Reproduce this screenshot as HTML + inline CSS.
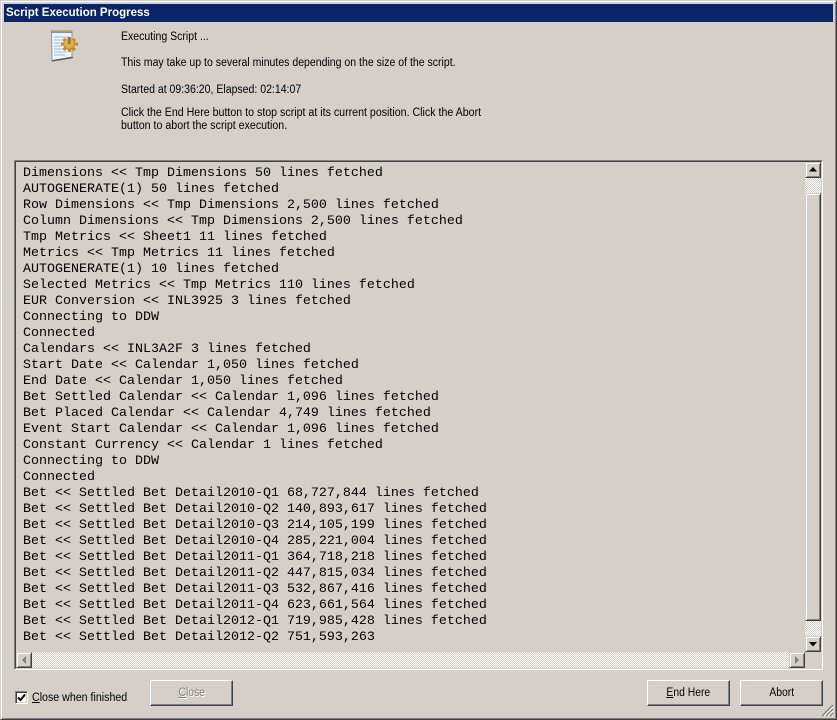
<!DOCTYPE html>
<html><head><meta charset="utf-8"><style>
html,body{margin:0;padding:0;background:#d4d0c8}
#w{position:relative;width:837px;height:720px;overflow:hidden;background:#d4d0c8;font-family:"Liberation Sans",sans-serif;font-size:11.5px;color:#000}
#w div{position:absolute;box-sizing:border-box}
.t{white-space:nowrap;line-height:14px;transform:scaleX(.915);transform-origin:0 0}
.c{transform:scaleX(.925)}
.chk{background-color:#fff;background-image:linear-gradient(45deg,#d4d0c8 25%,transparent 25%,transparent 75%,#d4d0c8 75%),linear-gradient(45deg,#d4d0c8 25%,transparent 25%,transparent 75%,#d4d0c8 75%);background-size:2px 2px;background-position:0 0,1px 1px}
.btn{background:#d4d0c8;border:1px solid;border-color:#fff #404040 #404040 #fff;box-shadow:inset -1px -1px 0 #808080}
.sb{background:#d4d0c8;border:1px solid;border-color:#d4d0c8 #404040 #404040 #d4d0c8;box-shadow:inset 1px 1px 0 #fff,inset -1px -1px 0 #808080}
.bt{text-align:center;line-height:24px;white-space:nowrap}
.bt span{display:inline-block;transform:scaleX(.9)}
#log{left:23px;top:166px;font:13.33px/16px "Liberation Mono",monospace;white-space:pre;color:#000}
</style></head><body><div id="w">
<div style="left:0;top:0;width:837px;height:720px;border:1px solid;border-color:#d4d0c8 #404040 #404040 #d4d0c8;box-shadow:inset 1px 1px 0 #fff,inset -1px -1px 0 #808080"></div>
<div style="left:4px;top:4px;width:829px;height:18px;background:#0a246a"></div>
<div style="left:6px;top:6px;color:#fff;font-weight:bold;font-size:11.5px;line-height:14px;white-space:nowrap">Script Execution Progress</div>

<svg style="position:absolute;left:49px;top:28px" width="32" height="35" viewBox="0 0 32 35">
<path d="M2.500 3H23V29L3 32.500Z" fill="#eef5fc" stroke="#8a93a8" stroke-width="1"/>
<path d="M3 33L24 29.500" stroke="#555" stroke-width="1.200"/>
<path d="M2 3H23V5H2Z" fill="#7f8fc4"/>
<path d="M4 2V4M7 2V4M10 2V4M13 2V4M16 2V4M19 2V4M22 2V4" stroke="#d9a92a" stroke-width="1.600"/>
<path d="M5 9H20M5 12H14M5 15H12M5 18H13M5 21H14M5 24H18M5 27H16" stroke="#a9cbe8" stroke-width="1.200"/>
<circle cx="20" cy="16" r="6" fill="#d99d2c"/>
<path d="M12 16H29M20.500 9V24M14.500 11L26 22M26 11L14.500 22" stroke="#c98a22" stroke-width="3"/>
<circle cx="20" cy="15.500" r="5" fill="#e6ae3d"/>
<path d="M19 9H21.500V16H19Z" fill="#777"/>
</svg>

<div class="t" style="left:121px;top:30px">Executing Script ...</div>
<div class="t" style="left:121px;top:56px">This may take up to several minutes depending on the size of the script.</div>
<div class="t" style="left:121px;top:83px">Started at 09:36:20, Elapsed: 02:14:07</div>
<div class="t c" style="left:121px;top:106px">Click the End Here button to stop script at its current position. Click the Abort</div>
<div class="t c" style="left:121px;top:119px">button to abort the script execution.</div>

<div style="left:14px;top:160px;width:809px;height:510px;border:1px solid;border-color:#808080 #fff #fff #808080"></div>
<div style="left:15px;top:161px;width:807px;height:508px;border:1px solid;border-color:#404040 #d4d0c8 #d4d0c8 #404040"></div>
<div id="log">Dimensions &lt;&lt; Tmp Dimensions 50 lines fetched
AUTOGENERATE(1) 50 lines fetched
Row Dimensions &lt;&lt; Tmp Dimensions 2,500 lines fetched
Column Dimensions &lt;&lt; Tmp Dimensions 2,500 lines fetched
Tmp Metrics &lt;&lt; Sheet1 11 lines fetched
Metrics &lt;&lt; Tmp Metrics 11 lines fetched
AUTOGENERATE(1) 10 lines fetched
Selected Metrics &lt;&lt; Tmp Metrics 110 lines fetched
EUR Conversion &lt;&lt; INL3925 3 lines fetched
Connecting to DDW
Connected
Calendars &lt;&lt; INL3A2F 3 lines fetched
Start Date &lt;&lt; Calendar 1,050 lines fetched
End Date &lt;&lt; Calendar 1,050 lines fetched
Bet Settled Calendar &lt;&lt; Calendar 1,096 lines fetched
Bet Placed Calendar &lt;&lt; Calendar 4,749 lines fetched
Event Start Calendar &lt;&lt; Calendar 1,096 lines fetched
Constant Currency &lt;&lt; Calendar 1 lines fetched
Connecting to DDW
Connected
Bet &lt;&lt; Settled Bet Detail2010-Q1 68,727,844 lines fetched
Bet &lt;&lt; Settled Bet Detail2010-Q2 140,893,617 lines fetched
Bet &lt;&lt; Settled Bet Detail2010-Q3 214,105,199 lines fetched
Bet &lt;&lt; Settled Bet Detail2010-Q4 285,221,004 lines fetched
Bet &lt;&lt; Settled Bet Detail2011-Q1 364,718,218 lines fetched
Bet &lt;&lt; Settled Bet Detail2011-Q2 447,815,034 lines fetched
Bet &lt;&lt; Settled Bet Detail2011-Q3 532,867,416 lines fetched
Bet &lt;&lt; Settled Bet Detail2011-Q4 623,661,564 lines fetched
Bet &lt;&lt; Settled Bet Detail2012-Q1 719,985,428 lines fetched
Bet &lt;&lt; Settled Bet Detail2012-Q2 751,593,263</div>

<!-- vertical scrollbar -->
<div class="chk" style="left:805px;top:178px;width:16px;height:458px"></div>
<div class="sb" style="left:805px;top:162px;width:16px;height:16px"></div>
<div class="sb" style="left:805px;top:193px;width:16px;height:428px"></div>
<div class="sb" style="left:805px;top:636px;width:16px;height:16px"></div>
<svg style="position:absolute;left:805px;top:162px" width="16" height="16"><path d="M8 5L12 9.500H4Z" fill="#000"/></svg>
<svg style="position:absolute;left:805px;top:636px" width="16" height="16"><path d="M4 6H12L8 10.500Z" fill="#000"/></svg>
<!-- horizontal scrollbar -->
<div class="chk" style="left:32px;top:652px;width:757px;height:16px"></div>
<div class="sb" style="left:16px;top:652px;width:16px;height:16px"></div>
<div class="sb" style="left:789px;top:652px;width:16px;height:16px"></div>
<svg style="position:absolute;left:16px;top:652px" width="16" height="16"><path d="M6 8L10 4V12Z" fill="#808080"/></svg>
<svg style="position:absolute;left:789px;top:652px" width="16" height="16"><path d="M6 4L10 8L6 12Z" fill="#808080"/></svg>

<!-- checkbox -->
<div style="left:15px;top:691px;width:13px;height:13px;background:#fff;border:1px solid;border-color:#808080 #fff #fff #808080;box-shadow:inset 1px 1px 0 #404040,inset -1px -1px 0 #d4d0c8"></div>
<svg style="position:absolute;left:15px;top:691px" width="13" height="13"><path d="M3 6.500L5.500 9L10 3.500" fill="none" stroke="#000" stroke-width="2"/></svg>
<div class="t" style="left:32px;top:691px;transform:scaleX(.925)"><u>C</u>lose when finished</div>

<div class="btn bt" style="left:150px;top:680px;width:83px;height:26px;color:#808080;text-shadow:1px 1px 0 #fff"><span><u>C</u>lose</span></div>
<div class="btn bt" style="left:647px;top:680px;width:83px;height:26px"><span><u>E</u>nd Here</span></div>
<div class="btn bt" style="left:740px;top:680px;width:83px;height:26px"><span>Abort</span></div>

<!-- grip -->
<svg style="position:absolute;left:821px;top:704px" width="13" height="13"><path d="M12 1L1 12M12 5L5 12M12 9L9 12" stroke="#808080" stroke-width="1.400"/><path d="M12 3L3 12M12 7L7 12M12 11L11 12" stroke="#fff" stroke-width="1"/></svg>
</div></body></html>
